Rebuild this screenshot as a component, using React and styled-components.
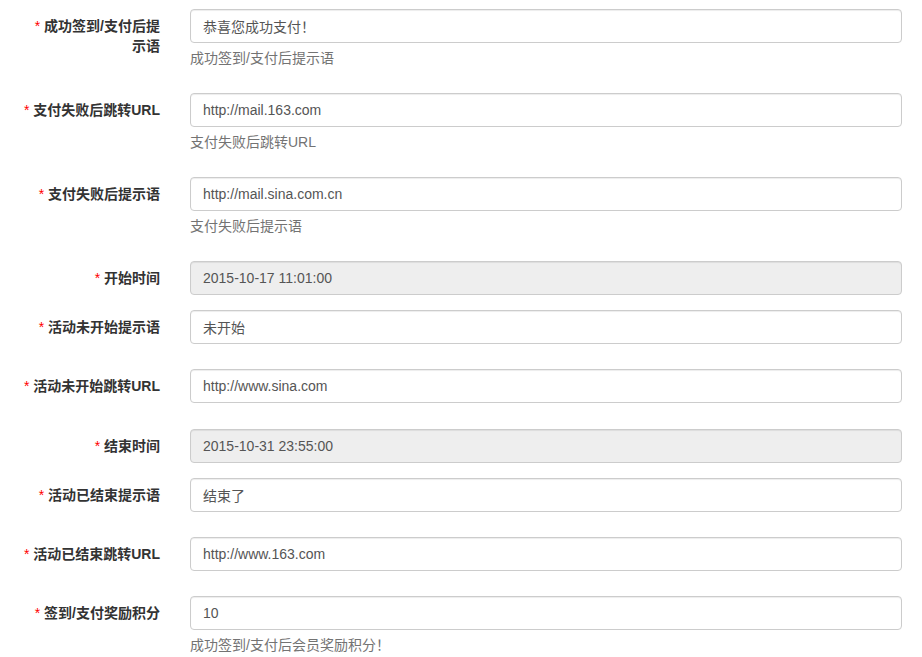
import styled, { createGlobalStyle } from "styled-components";

const GlobalStyle = createGlobalStyle`
  html, body {
    margin: 0;
    padding: 0;
    background: #fff;
  }
  body {
    font-family: "Liberation Sans", Arial, "Noto Sans CJK SC", sans-serif;
    font-size: 14px;
    line-height: 20px;
    color: #333;
  }
`;

const fields = [
  { label: "成功签到/支付后提\n示语", value: "恭喜您成功支付！", help: "成功签到/支付后提示语" },
  { label: "支付失败后跳转URL", value: "http://mail.163.com", help: "支付失败后跳转URL" },
  { label: "支付失败后提示语", value: "http://mail.sina.com.cn", help: "支付失败后提示语" },
  { label: "开始时间", value: "2015-10-17 11:01:00", disabled: true },
  { label: "活动未开始提示语", value: "未开始", extra: 10 },
  { label: "活动未开始跳转URL", value: "http://www.sina.com", extra: 11 },
  { label: "结束时间", value: "2015-10-31 23:55:00", disabled: true },
  { label: "活动已结束提示语", value: "结束了", extra: 10 },
  { label: "活动已结束跳转URL", value: "http://www.163.com", extra: 10 },
  { label: "签到/支付奖励积分", value: "10", help: "成功签到/支付后会员奖励积分！" },
];

export default function App() {
  return (
    <>
      <GlobalStyle />
      <Form>
        {fields.map((f) => (
          <Group key={f.label} $extra={f.extra || 0}>
            <Label>
              <Star>*</Star> {f.label}
            </Label>
            <Control>
              <Input type="text" defaultValue={f.value} disabled={f.disabled} />
              {f.help && <Help>{f.help}</Help>}
            </Control>
          </Group>
        ))}
      </Form>
    </>
  );
}

const Form = styled.form`
  padding: 9px 20px 0 0;
`;

const Group = styled.div`
  display: grid;
  grid-template-columns: 175px 1fr;
  margin-bottom: ${(p) => 15 + p.$extra}px;
`;

const Label = styled.label`
  padding: 7px 15px 0 15px;
  text-align: right;
  font-weight: bold;
  color: #333;
  white-space: pre-line;
  font-family: "Liberation Sans", Arial, "Noto Sans CJK SC", sans-serif;
`;

const Star = styled.span`
  color: #f00;
  font-weight: normal;
`;

const Control = styled.div`
  padding-left: 15px;
  display: flex;
  flex-direction: column;
`;

const Input = styled.input`
  box-sizing: border-box;
  width: 100%;
  height: 34px;
  padding: 6px 12px;
  font-family: "Liberation Sans", Arial, "Noto Sans CJK SC", sans-serif;
  font-size: 14px;
  line-height: 20px;
  color: #555;
  background: #fff;
  border: 1px solid #ccc;
  border-radius: 4px;
  box-shadow: inset 0 1px 1px rgba(0, 0, 0, 0.075);
  outline: none;
  &:disabled {
    background: #eee;
    color: #555;
    opacity: 1;
  }
`;

const Help = styled.span`
  display: block;
  margin: 5px 0 10px;
  color: #737373;
`;
